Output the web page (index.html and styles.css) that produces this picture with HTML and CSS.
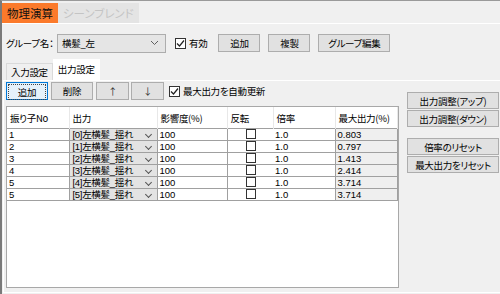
FILE: index.html
```html
<!DOCTYPE html>
<html lang="ja">
<head>
    <meta charset="utf-8">
    <title>物理演算</title>
    <link rel="stylesheet" href="styles.css">
</head>
<body>
    <div class="window">
        <div class="tabbar">
            <div class="tab tab-active">物理演算</div>
            <div class="tab tab-disabled">シーンブレンド</div>
        </div>

        <div class="panel">
            <div class="group-row">
                <span class="label">グループ名：</span>
                <div class="combo">
                    <span>横髪_左</span>
                    <svg class="chevron" width="9" height="6" viewBox="0 0 9 6"><path d="M1 1 L4.5 4.5 L8 1" fill="none" stroke="#606060" stroke-width="1"/></svg>
                </div>
                <label class="check">
                    <span class="box"><svg width="9" height="9" viewBox="0 0 9 9"><path d="M1 4.5 L3.5 7 L8 1.5" fill="none" stroke="#222" stroke-width="1.2"/></svg></span>
                    有効
                </label>
                <button class="btn btn-add">追加</button>
                <button class="btn btn-copy">複製</button>
                <button class="btn btn-edit">グループ編集</button>
            </div>

            <div class="subtabs">
                <div class="subtab">入力設定</div>
                <div class="subtab subtab-active">出力設定</div>
            </div>

            <div class="page">
                <div class="main">
                    <div class="toolbar">
                        <button class="btn tool focused"><span class="focus-rect">追加</span></button>
                        <button class="btn tool">削除</button>
                        <button class="btn tool arrow">↑</button>
                        <button class="btn tool arrow">↓</button>
                        <label class="check auto">
                            <span class="box"><svg width="9" height="9" viewBox="0 0 9 9"><path d="M1 4.5 L3.5 7 L8 1.5" fill="none" stroke="#222" stroke-width="1.2"/></svg></span>
                            最大出力を自動更新
                        </label>
                    </div>

                    <div class="grid">
                        <table>
                            <colgroup>
                                <col class="c-no">
                                <col class="c-out">
                                <col class="c-eff">
                                <col class="c-inv">
                                <col class="c-rate">
                                <col class="c-max">
                            </colgroup>
                            <thead>
                                <tr>
                                    <th>振り子No</th>
                                    <th>出力</th>
                                    <th>影響度(%)</th>
                                    <th>反転</th>
                                    <th>倍率</th>
                                    <th>最大出力(%)</th>
                                </tr>
                            </thead>
                            <tbody>
                                <tr>
                                    <td>1</td>
                                    <td class="cell-combo"><span>[0]左横髪_揺れ</span><i></i></td>
                                    <td>100</td>
                                    <td class="cell-check"><span></span></td>
                                    <td class="cell-rate">1.0</td>
                                    <td class="cell-max">0.803</td>
                                </tr>
                                <tr>
                                    <td>2</td>
                                    <td class="cell-combo"><span>[1]左横髪_揺れ</span><i></i></td>
                                    <td>100</td>
                                    <td class="cell-check"><span></span></td>
                                    <td class="cell-rate">1.0</td>
                                    <td class="cell-max">0.797</td>
                                </tr>
                                <tr>
                                    <td>3</td>
                                    <td class="cell-combo"><span>[2]左横髪_揺れ</span><i></i></td>
                                    <td>100</td>
                                    <td class="cell-check"><span></span></td>
                                    <td class="cell-rate">1.0</td>
                                    <td class="cell-max">1.413</td>
                                </tr>
                                <tr>
                                    <td>4</td>
                                    <td class="cell-combo"><span>[3]左横髪_揺れ</span><i></i></td>
                                    <td>100</td>
                                    <td class="cell-check"><span></span></td>
                                    <td class="cell-rate">1.0</td>
                                    <td class="cell-max">2.414</td>
                                </tr>
                                <tr>
                                    <td>5</td>
                                    <td class="cell-combo"><span>[4]左横髪_揺れ</span><i></i></td>
                                    <td>100</td>
                                    <td class="cell-check"><span></span></td>
                                    <td class="cell-rate">1.0</td>
                                    <td class="cell-max">3.714</td>
                                </tr>
                                <tr>
                                    <td>5</td>
                                    <td class="cell-combo"><span>[5]左横髪_揺れ</span><i></i></td>
                                    <td>100</td>
                                    <td class="cell-check"><span></span></td>
                                    <td class="cell-rate">1.0</td>
                                    <td class="cell-max">3.714</td>
                                </tr>
                            </tbody>
                        </table>
                    </div>
                </div>

                <div class="side">
                    <button class="btn side-btn">出力調整(アップ)</button>
                    <button class="btn side-btn">出力調整(ダウン)</button>
                    <button class="btn side-btn gap">倍率のリセット</button>
                    <button class="btn side-btn">最大出力をリセット</button>
                </div>
            </div>
        </div>
    </div>
</body>
</html>
```

FILE: styles.css
```css
body {
    margin: 0;
    padding: 0;
    background-color: #f0f0f0;
    font-family: "Noto Sans CJK JP", "Liberation Sans", sans-serif;
    font-size: 9.5px;
    letter-spacing: -0.3px;
    font-feature-settings: "palt";
    color: #000;
}

.window {
    width: 500px;
    height: 294px;
    box-sizing: border-box;
    border-top: 1px solid #9a9a9a;
    border-left: 2px solid #7a7a7a;
    overflow: hidden;
}

/* top tabs */
.tabbar {
    display: flex;
    height: 20px;
    padding-top: 2px;
    border-bottom: 1px solid #fff;
}

.tab {
    height: 20px;
    line-height: 20px;
    padding: 0 5px;
    font-size: 11.5px;
    letter-spacing: 0;
}

.tab-active {
    background-color: #fb7a2b;
    color: #111;
}

.tab-disabled {
    background-color: #e4e4e4;
    color: #c4c4c4;
}

/* group row */
.group-row {
    display: flex;
    align-items: center;
    height: 20px;
    margin-top: 9px;
    padding-left: 4px;
}

.label {
    flex-shrink: 0;
    width: 51px;
    white-space: nowrap;
}

.combo {
    display: flex;
    align-items: center;
    justify-content: space-between;
    flex-shrink: 0;
    width: 109px;
    height: 19px;
    padding: 0 6px 0 4px;
    box-sizing: border-box;
    background-color: #e5e5e5;
    border: 1px solid #adadad;
}

.check {
    display: flex;
    align-items: center;
    flex-shrink: 0;
    margin-left: 9px;
    white-space: nowrap;
}

.box {
    display: flex;
    align-items: center;
    justify-content: center;
    width: 11px;
    height: 11px;
    box-sizing: border-box;
    margin-right: 3px;
    background-color: #fff;
    border: 1px solid #333;
}

.btn {
    flex-shrink: 0;
    height: 18px;
    padding: 0;
    box-sizing: border-box;
    background-color: #e1e1e1;
    border: 1px solid #adadad;
    font-family: inherit;
    font-size: 9.5px;
    letter-spacing: -0.3px;
    font-feature-settings: "palt";
    color: #000;
    white-space: nowrap;
}

.btn-add {
    width: 42px;
    margin-left: 11px;
}

.btn-copy {
    width: 42px;
    margin-left: 8px;
}

.btn-edit {
    width: 72px;
    margin-left: 8px;
}

/* inner tabs */
.subtabs {
    display: flex;
    align-items: flex-end;
    height: 20px;
    margin-top: 7px;
    padding-left: 4px;
}

.subtab {
    height: 16px;
    line-height: 16px;
    padding: 0 4px;
    background-color: #f0f0f0;
    border: 1px solid #dadada;
    border-bottom: none;
}

.subtab-active {
    height: 20px;
    line-height: 19px;
    background-color: #fff;
    border-color: #fff;
}

.page {
    display: flex;
    height: 211px;
    margin-left: 1px;
    border-top: 1px solid #fff;
    border-left: 1px solid #fff;
    border-bottom: 1px solid #fff;
}

.main {
    width: 393px;
    padding-left: 2px;
}

.toolbar {
    display: flex;
    align-items: center;
    height: 18px;
    margin-top: 1px;
}

.tool {
    width: 42px;
    margin-right: 3px;
}

.arrow {
    width: 33px;
    margin-right: 2px;
    color: #333;
}

.focused {
    background-color: #e5f1fb;
    border-color: #0078d7;
    padding: 1px;
}

.focus-rect {
    display: block;
    height: 14px;
    line-height: 14px;
    border: 1px dotted #444;
}

.auto {
    margin-left: 3px;
}

/* data grid */
.grid {
    height: 182px;
    margin-top: 6px;
    box-sizing: border-box;
    background-color: #fff;
    border: 1px solid #a8a8a8;
}

table {
    width: 390px;
    border-collapse: collapse;
    table-layout: fixed;
}

.c-no { width: 62px; }
.c-out { width: 88px; }
.c-eff { width: 70px; }
.c-inv { width: 46px; }
.c-rate { width: 62px; }
.c-max { width: 62px; }

th {
    height: 21px;
    padding: 0 0 0 3px;
    font-weight: normal;
    text-align: left;
    white-space: nowrap;
    border-right: 1px solid #e8e8e8;
}

td {
    height: 11px;
    padding: 0 0 0 2px;
    font-family: "Liberation Sans", "Noto Sans CJK JP", sans-serif;
    font-size: 9.5px;
    letter-spacing: 0;
    line-height: 11px;
    white-space: nowrap;
    border-bottom: 1px solid #a0a0a0;
    border-right: 1px solid #a0a0a0;
}

tbody tr:first-child td {
    border-top: 1px solid #a0a0a0;
}

td.cell-check {
    border-right: none;
    text-align: center;
    padding: 0;
}

.cell-check span {
    display: inline-block;
    width: 10px;
    height: 10px;
    box-sizing: border-box;
    margin-left: 2px;
    vertical-align: top;
    background-color: #fff;
    border: 1px solid #333;
}

.cell-combo {
    position: relative;
    background-color: #e3e3e3;
    padding-left: 3px;
    letter-spacing: -0.3px;
}

.cell-combo i {
    position: absolute;
    right: 6px;
    top: 3px;
    width: 4px;
    height: 4px;
    border-right: 1px solid #555;
    border-bottom: 1px solid #555;
    transform: rotate(45deg);
}

.cell-max {
    background-color: #efefef;
}

/* side buttons */
.side {
    display: flex;
    flex-direction: column;
    width: 92px;
    margin-left: 8px;
    padding-top: 11px;
}

.side-btn {
    height: 17px;
    margin-bottom: 1px;
}

.gap {
    margin-top: 10px;
}
```
